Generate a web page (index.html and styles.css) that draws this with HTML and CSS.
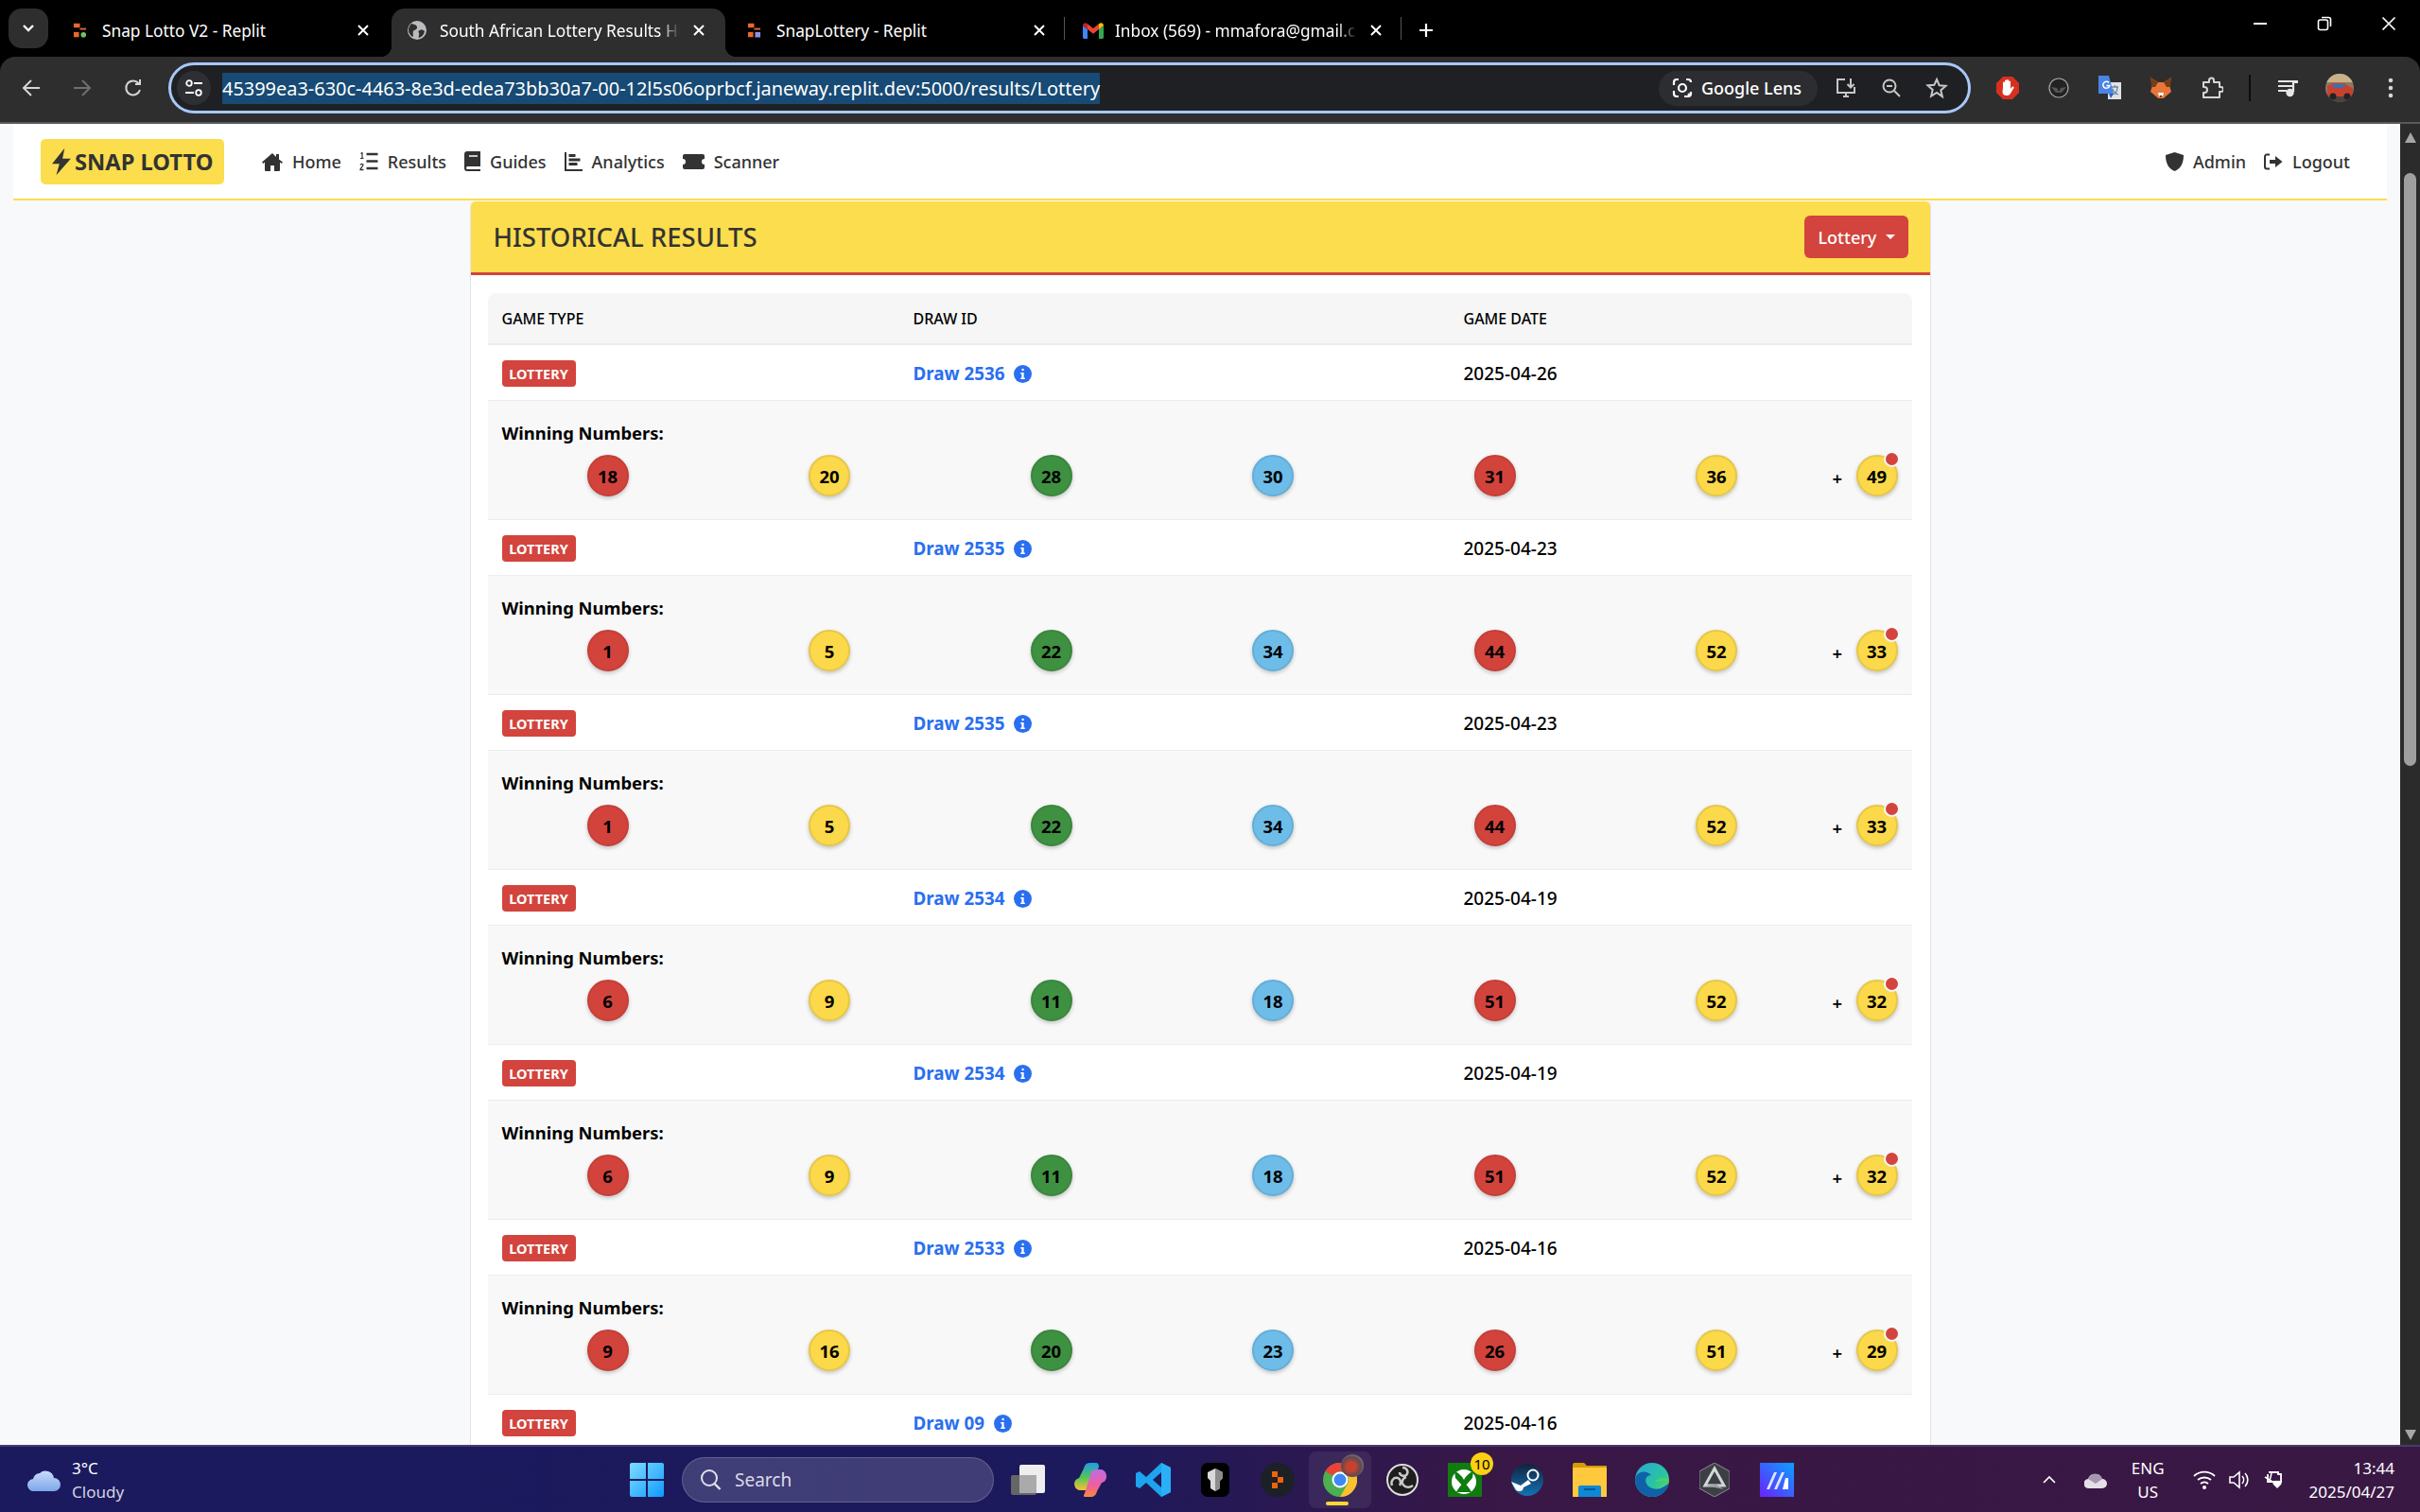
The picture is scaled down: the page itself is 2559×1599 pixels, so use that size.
FILE: index.html
```html
<!DOCTYPE html>
<html lang="en">
<head>
<meta charset="utf-8">
<title>South African Lottery Results History</title>
<link rel="stylesheet" href="styles.css">
</head>
<body>
<svg class="defs" width="0" height="0">
  <symbol id="info" viewBox="0 0 20 20"><circle cx="10" cy="10" r="10" fill="#2a6ff0"/><rect x="8.800" y="4" width="2.600" height="2.600" rx="1.300" fill="#fff"/><path d="M7.600 8.300h3.600v6h1.200v1.600H7.600v-1.600h1.200V9.900H7.600z" fill="#fff"/></symbol>
  <symbol id="replit" viewBox="0 0 16 16"><rect x="1" y="0" width="7" height="5" fill="#e8682a"/><rect x="8" y="5.500" width="7" height="2" fill="#e8682a"/><rect x="1" y="10" width="6" height="6" fill="#e8682a"/></symbol>
  <symbol id="x" viewBox="0 0 16 16"><path d="M3 3l10 10M13 3L3 13" stroke="#fff" stroke-width="2" fill="none"/></symbol>
</svg>

<header class="tabstrip">
  <button class="tab-list"><svg width="14" height="10" viewBox="0 0 14 10"><path d="M2 2l5 5 5-5" stroke="#fff" stroke-width="2.400" fill="none"/></svg></button>
  <div class="tab first">
    <svg class="fav" width="15" height="16" viewBox="0 0 16 16"><use href="#replit"/><circle cx="12" cy="13" r="3" fill="#6cc56c"/></svg>
    <span class="tab-title">Snap Lotto V2 - Replit</span>
    <svg class="close" width="16" height="16"><use href="#x"/></svg>
  </div>
  <div class="tab active">
    <svg class="fav" width="20" height="20" viewBox="0 0 20 20"><circle cx="10" cy="10" r="10" fill="#b9bbbe"/><path d="M4 3c3 1 6 1 6 4s-3 2-4 4 1 5-1 6c-2-2-4-4-4-7s1-5 3-7zM13 10c2-1 4 0 5 1-1 4-3 6-6 7-1-3 1-3 0-5s-1-2 1-3z" fill="#2e2e2e"/></svg>
    <span class="tab-title fade">South African Lottery Results History</span>
    <svg class="close" width="16" height="16"><use href="#x"/></svg>
  </div>
  <div class="tab third">
    <svg class="fav" width="15" height="16" viewBox="0 0 16 16"><use href="#replit"/><rect x="9" y="10" width="6" height="6" fill="#8f8fe0"/></svg>
    <span class="tab-title">SnapLottery - Replit</span>
    <svg class="close" width="16" height="16"><use href="#x"/></svg>
  </div>
  <div class="tab last">
    <svg class="fav gmail" width="22" height="17" viewBox="0 0 22 17"><path d="M0 3v12.500C0 16.300.7 17 1.500 17H5V7z" fill="#4285f4"/><path d="M22 3v12.500c0 .8-.7 1.500-1.500 1.500H17V7z" fill="#34a853"/><path d="M0 3c0-2.500 2.700-3.600 4.400-2.200L5 1.300V7z" fill="#c5221f"/><path d="M5 1.300L11 6l6-4.700V7l-6 4.700L5 7z" fill="#ea4335"/><path d="M17 1.300l.6-.5C19.300-.6 22 .5 22 3l-5 4z" fill="#fbbc04"/></svg>
    <span class="tab-title fade">Inbox (569) - mmafora@gmail.com</span>
    <svg class="close" width="16" height="16"><use href="#x"/></svg>
  </div>
  <div class="new-tab"><svg width="18" height="18" viewBox="0 0 18 18"><path d="M9 2v14M2 9h14" stroke="#fff" stroke-width="2.200"/></svg></div>
  <div class="window-controls">
    <svg width="16" height="16" viewBox="0 0 16 16"><path d="M1 8h14" stroke="#fff" stroke-width="2"/></svg>
    <svg width="16" height="16" viewBox="0 0 16 16"><rect x="1.500" y="4" width="10" height="10.500" rx="2" fill="none" stroke="#fff" stroke-width="1.600"/><path d="M5 1.500h7.500a2 2 0 0 1 2 2V11" fill="none" stroke="#fff" stroke-width="1.600"/></svg>
    <svg width="16" height="16" viewBox="0 0 16 16"><path d="M1.500 1.500l13 13M14.500 1.500l-13 13" stroke="#fff" stroke-width="1.700"/></svg>
  </div>
</header>

<div class="toolbar">
  <div class="nav-btn"><svg width="22" height="22" viewBox="0 0 22 22"><path d="M20 11H3M11 3l-8 8 8 8" fill="none" stroke="#d6d6d6" stroke-width="2"/></svg></div>
  <div class="nav-btn"><svg width="22" height="22" viewBox="0 0 22 22"><path d="M2 11h17M11 3l8 8-8 8" fill="none" stroke="#6f6f6f" stroke-width="2"/></svg></div>
  <div class="nav-btn"><svg width="22" height="22" viewBox="0 0 22 22"><path d="M18 13a7.500 7.500 0 1 1-1.500-7M18 2v5h-5" fill="none" stroke="#d6d6d6" stroke-width="2"/></svg></div>
  <div class="omnibox">
    <span class="site-btn"><svg width="20" height="20" viewBox="0 0 20 20"><circle cx="5" cy="5" r="2.800" fill="none" stroke="#fff" stroke-width="1.800"/><path d="M10 5h9M1 15h9" stroke="#fff" stroke-width="1.800"/><circle cx="15" cy="15" r="2.800" fill="none" stroke="#fff" stroke-width="1.800"/></svg></span>
    <span class="url">45399ea3-630c-4463-8e3d-edea73bb30a7-00-12l5s06oprbcf.janeway.replit.dev:5000/results/Lottery</span>
    <span class="lens">
      <svg width="22" height="22" viewBox="0 0 22 22"><path d="M2 8V5a3 3 0 0 1 3-3h2M15 2h2a3 3 0 0 1 3 3M7 20H5a3 3 0 0 1-3-3v-3M20 15v2a3 3 0 0 1-3 3h-4" fill="none" stroke="#fff" stroke-width="2.200"/><circle cx="11" cy="11" r="4" fill="none" stroke="#fff" stroke-width="2.200"/><circle cx="18" cy="18" r="1.500" fill="#fff"/></svg>
      <span>Google Lens</span>
    </span>
    <span class="omni-icon"><svg width="24" height="24" viewBox="0 0 24 24"><path d="M11 3H3v14h18v-6M9 21h6M12 17v4" fill="none" stroke="#c7c7c7" stroke-width="2"/><path d="M17 2v9M13.500 8l3.500 3.500L20.500 8" fill="none" stroke="#c7c7c7" stroke-width="2"/></svg></span>
    <span class="omni-icon"><svg width="22" height="22" viewBox="0 0 22 22"><circle cx="9" cy="9" r="6.500" fill="none" stroke="#c7c7c7" stroke-width="2"/><path d="M6 9h6M14 14l6 6" stroke="#c7c7c7" stroke-width="2"/></svg></span>
    <span class="omni-icon"><svg width="24" height="24" viewBox="0 0 24 24"><path d="M12 3l2.700 6.300 6.800.6-5.200 4.500 1.600 6.700L12 17l-5.900 3.600 1.600-6.700-5.200-4.500 6.800-.6z" fill="none" stroke="#c7c7c7" stroke-width="2"/></svg></span>
  </div>
  <div class="extensions">
    <span class="ext"><svg width="26" height="26" viewBox="0 0 26 26"><path d="M8 1h10l7 7v10l-7 7H8l-7-7V8z" fill="#d8301f"/><path d="M8 13V7.500a1 1 0 0 1 2 0V12V5.500a1 1 0 0 1 2 0V12V5a1 1 0 0 1 2 0v7V6.500a1 1 0 0 1 2 0V14l1.500-2c1-1 2.500 0 2 1l-3 5c-1 2-2 3-4 3h-1c-2 0-4-1-4-4z" fill="#fff"/></svg></span>
    <span class="ext"><svg width="22" height="22" viewBox="0 0 22 22"><circle cx="11" cy="11" r="10" fill="#222" stroke="#aaa" stroke-width="1.200"/><path d="M3 10l6 1 2 4 2-4 6-1-5 6h-6z" fill="#555"/></svg></span>
    <span class="ext"><svg width="26" height="26" viewBox="0 0 26 26"><path d="M11 7h14v18H11z" fill="#dfe3e6"/><path d="M15 12h7M18.500 10v2M16 20c3-1 5-4 5-8M16 14c1 3 3 5 6 6" fill="none" stroke="#6f8a96" stroke-width="1.300"/><path d="M1 0h11l5 19H1z" fill="#4b83e6"/><path d="M12 19l5 0-3 5z" fill="#2f5fc0"/><path d="M12 7.500a3.500 3.500 0 1 0 .8 3H9.500" fill="none" stroke="#fff" stroke-width="1.500"/></svg></span>
    <span class="ext"><svg width="24" height="24" viewBox="0 0 24 24"><path d="M1 1l8 5h6l8-5-2 8 2 7-6 5-2 2h-6l-2-2-6-5 2-7z" fill="#e8763a"/><path d="M1 1l8 5-3 5H2zM23 1l-8 5 3 5h4z" fill="#763d16"/><path d="M9 17h6l-1 4h-4z" fill="#fff"/><path d="M10.500 20h3l-1.500 2z" fill="#222"/></svg></span>
    <span class="ext"><svg width="24" height="24" viewBox="0 0 24 24"><path d="M3 6h6V4a2.500 2.500 0 0 1 5 0v2h6v5h1.500a2.500 2.500 0 0 1 0 5H20v6H3v-5h1a3 3 0 0 0 0-6H3z" fill="none" stroke="#d6d6d6" stroke-width="2" stroke-linejoin="round"/></svg></span>
  </div>
  <span class="tool-sep"></span>
  <div class="profile-tools">
    <span class="ext2"><svg width="24" height="22" viewBox="0 0 24 22"><path d="M1 4h15M1 9h15M1 14h9" stroke="#e6e6e6" stroke-width="2.200"/><path d="M17 3v12" stroke="#e6e6e6" stroke-width="2.200"/><path d="M17 3h5v3h-5z" fill="#e6e6e6"/><circle cx="13.500" cy="16" r="4.200" fill="#e6e6e6"/></svg></span>
    <span class="ext2 avatar"><svg width="30" height="30" viewBox="0 0 30 30"><defs><clipPath id="av"><circle cx="15" cy="15" r="15"/></clipPath></defs><g clip-path="url(#av)"><rect width="30" height="30" fill="#8b7a64"/><rect width="30" height="9" fill="#c9b28a"/><rect y="22" width="30" height="8" fill="#4a4440"/><path d="M2 13l6-3h12l6 4 3 1v9H2z" fill="#c8412f"/><rect x="8" y="11" width="12" height="4" fill="#3d6fb0"/><circle cx="8" cy="24" r="3.500" fill="#222"/><circle cx="23" cy="24" r="3.500" fill="#222"/></g></svg></span>
    <span class="ext2"><svg width="6" height="22" viewBox="0 0 6 22"><circle cx="3" cy="3" r="2.300" fill="#d6d6d6"/><circle cx="3" cy="11" r="2.300" fill="#d6d6d6"/><circle cx="3" cy="19" r="2.300" fill="#d6d6d6"/></svg></span>
  </div>
</div>

<div class="viewport">
  <main class="page">
    <nav class="site-nav">
      <a class="brand"><svg width="22" height="30" viewBox="0 0 20 26"><path d="M13 0L1 15h7l-3 11 14-16h-8z" fill="#333"/></svg>SNAP LOTTO</a>
      <a class="nav-item"><svg width="22" height="20" viewBox="0 0 22 20"><path d="M11 1L0 10.500l1.300 1.500L3 10.500V19a1 1 0 0 0 1 1h5v-6h4v6h5a1 1 0 0 0 1-1v-8.500l1.700 1.500 1.300-1.500L18 7.500V2h-3v3z" fill="#333"/></svg>Home</a>
      <a class="nav-item"><svg width="20" height="20" viewBox="0 0 20 20"><path d="M1.500 1.500L3 .5v6M1 6.500h3.500" fill="none" stroke="#333" stroke-width="1.200"/><path d="M1 13.500c.5-1.500 3-1.500 3 0 0 1.500-3 3-3 5h3.500" fill="none" stroke="#333" stroke-width="1.300"/><path d="M7.500 2h12M7.500 9.500h12M7.500 17h12" stroke="#333" stroke-width="2.600"/></svg>Results</a>
      <a class="nav-item"><svg width="17" height="21" viewBox="0 0 17 21"><path d="M3 0h14v16H3.500a1.500 1.500 0 0 0 0 3H17v2H3a3 3 0 0 1-3-3V3a3 3 0 0 1 3-3z" fill="#333"/><path d="M5 5h9" stroke="#fff" stroke-width="1.500"/></svg>Guides</a>
      <a class="nav-item"><svg width="19" height="20" viewBox="0 0 19 20"><path d="M1 0v19h18" fill="none" stroke="#333" stroke-width="2"/><path d="M4.500 3.500h7M4.500 8h12M4.500 12.500h9" stroke="#333" stroke-width="2.800"/></svg>Analytics</a>
      <a class="nav-item"><svg width="23" height="18" viewBox="0 0 23 18"><path d="M2 1h19a2 2 0 0 1 2 2v3a3 3 0 0 0 0 6v3a2 2 0 0 1-2 2H2a2 2 0 0 1-2-2v-3a3 3 0 0 0 0-6V3a2 2 0 0 1 2-2z" fill="#333"/></svg>Scanner</a>
      <a class="nav-item push"><svg width="19" height="20" viewBox="0 0 19 20"><path d="M9.500 0L19 3c0 8-2.500 14-9.500 17C2.500 17 0 11 0 3z" fill="#333"/></svg>Admin</a>
      <a class="nav-item"><svg width="20" height="18" viewBox="0 0 20 18"><path d="M6 1.500H3A2 2 0 0 0 1 3.500v11a2 2 0 0 0 2 2h3" fill="none" stroke="#333" stroke-width="2"/><path d="M6 7h6V3l7.500 6-7.500 6v-4H6z" fill="#333"/></svg>Logout</a>
    </nav>

    <section class="card">
      <div class="card-head">
        <h1>HISTORICAL RESULTS</h1>
        <button class="filter">Lottery<span class="caret"></span></button>
      </div>
      <div class="card-body">
        <table class="results">
          <thead>
            <tr><th class="col-type">GAME TYPE</th><th class="col-draw">DRAW ID</th><th>GAME DATE</th></tr>
          </thead>
          <tbody>
            <tr class="draw"><td><span class="badge">LOTTERY</span></td><td><a class="draw-link">Draw 2536</a><svg class="info" width="19" height="19"><use href="#info"/></svg></td><td class="date">2025-04-26</td></tr>
            <tr class="nums"><td colspan="3"><div class="win">Winning Numbers:</div><div class="balls"><span class="ball red">18</span><span class="ball yellow">20</span><span class="ball green">28</span><span class="ball blue">30</span><span class="ball red">31</span><span class="ball yellow">36</span><span class="bonus"><span class="plus">+</span><span class="ball yellow dot">49</span></span></div></td></tr>

            <tr class="draw"><td><span class="badge">LOTTERY</span></td><td><a class="draw-link">Draw 2535</a><svg class="info" width="19" height="19"><use href="#info"/></svg></td><td class="date">2025-04-23</td></tr>
            <tr class="nums"><td colspan="3"><div class="win">Winning Numbers:</div><div class="balls"><span class="ball red">1</span><span class="ball yellow">5</span><span class="ball green">22</span><span class="ball blue">34</span><span class="ball red">44</span><span class="ball yellow">52</span><span class="bonus"><span class="plus">+</span><span class="ball yellow dot">33</span></span></div></td></tr>

            <tr class="draw"><td><span class="badge">LOTTERY</span></td><td><a class="draw-link">Draw 2535</a><svg class="info" width="19" height="19"><use href="#info"/></svg></td><td class="date">2025-04-23</td></tr>
            <tr class="nums"><td colspan="3"><div class="win">Winning Numbers:</div><div class="balls"><span class="ball red">1</span><span class="ball yellow">5</span><span class="ball green">22</span><span class="ball blue">34</span><span class="ball red">44</span><span class="ball yellow">52</span><span class="bonus"><span class="plus">+</span><span class="ball yellow dot">33</span></span></div></td></tr>

            <tr class="draw"><td><span class="badge">LOTTERY</span></td><td><a class="draw-link">Draw 2534</a><svg class="info" width="19" height="19"><use href="#info"/></svg></td><td class="date">2025-04-19</td></tr>
            <tr class="nums"><td colspan="3"><div class="win">Winning Numbers:</div><div class="balls"><span class="ball red">6</span><span class="ball yellow">9</span><span class="ball green">11</span><span class="ball blue">18</span><span class="ball red">51</span><span class="ball yellow">52</span><span class="bonus"><span class="plus">+</span><span class="ball yellow dot">32</span></span></div></td></tr>

            <tr class="draw"><td><span class="badge">LOTTERY</span></td><td><a class="draw-link">Draw 2534</a><svg class="info" width="19" height="19"><use href="#info"/></svg></td><td class="date">2025-04-19</td></tr>
            <tr class="nums"><td colspan="3"><div class="win">Winning Numbers:</div><div class="balls"><span class="ball red">6</span><span class="ball yellow">9</span><span class="ball green">11</span><span class="ball blue">18</span><span class="ball red">51</span><span class="ball yellow">52</span><span class="bonus"><span class="plus">+</span><span class="ball yellow dot">32</span></span></div></td></tr>

            <tr class="draw"><td><span class="badge">LOTTERY</span></td><td><a class="draw-link">Draw 2533</a><svg class="info" width="19" height="19"><use href="#info"/></svg></td><td class="date">2025-04-16</td></tr>
            <tr class="nums"><td colspan="3"><div class="win">Winning Numbers:</div><div class="balls"><span class="ball red">9</span><span class="ball yellow">16</span><span class="ball green">20</span><span class="ball blue">23</span><span class="ball red">26</span><span class="ball yellow">51</span><span class="bonus"><span class="plus">+</span><span class="ball yellow dot">29</span></span></div></td></tr>

            <tr class="draw"><td><span class="badge">LOTTERY</span></td><td><a class="draw-link">Draw 09</a><svg class="info" width="19" height="19"><use href="#info"/></svg></td><td class="date">2025-04-16</td></tr>
          </tbody>
        </table>
      </div>
    </section>
  </main>
  <aside class="scrollbar">
    <span class="arrow-up"></span>
    <span class="thumb"></span>
    <span class="arrow-down"></span>
  </aside>
</div>

<footer class="taskbar">
  <div class="weather">
    <svg width="36" height="26" viewBox="0 0 36 26"><defs><linearGradient id="cl" x1="0" y1="0" x2="0" y2="1"><stop offset="0" stop-color="#c7dcfb"/><stop offset="1" stop-color="#7ea6e8"/></linearGradient></defs><path d="M7 25a6.500 6.500 0 0 1-1-13 8 8 0 0 1 7-6 9 9 0 0 1 15 5 7 7 0 0 1 0 14z" fill="url(#cl)"/></svg>
    <div class="weather-text"><span>3°C</span><span class="dim">Cloudy</span></div>
  </div>
  <div class="apps">
    <span class="app"><svg width="36" height="36" viewBox="0 0 36 36"><defs><linearGradient id="st" x1="0" y1="0" x2="1" y2="1"><stop offset="0" stop-color="#7fdcff"/><stop offset="1" stop-color="#0f9bff"/></linearGradient></defs><path d="M0 2a2 2 0 0 1 2-2h15v17H0zM19 0h15a2 2 0 0 1 2 2v15H19zM0 19h17v17H2a2 2 0 0 1-2-2zM19 19h17v15a2 2 0 0 1-2 2H19z" fill="url(#st)"/></svg></span>
    <span class="search"><svg width="23" height="24" viewBox="0 0 23 24"><circle cx="10" cy="10" r="8" fill="none" stroke="#e2e0ee" stroke-width="2"/><path d="M15.500 16l6 6" stroke="#e2e0ee" stroke-width="2.400"/></svg><span>Search</span></span>
    <span class="app"><svg width="36" height="32" viewBox="0 0 36 32"><rect x="0" y="11" width="27" height="21" rx="2" fill="#666"/><rect x="9" y="0" width="27" height="30" rx="2" fill="#eee"/><rect x="9" y="11" width="18" height="19" fill="#aaa"/></svg></span>
    <span class="app"><svg width="34" height="36" viewBox="0 0 34 36"><defs><linearGradient id="cp1" x1="0" y1="0" x2="0" y2="1"><stop offset="0" stop-color="#1f9be8"/><stop offset=".5" stop-color="#4ec45c"/><stop offset="1" stop-color="#f7c22f"/></linearGradient><linearGradient id="cp2" x1="0" y1="0" x2="0" y2="1"><stop offset="0" stop-color="#c06be8"/><stop offset=".6" stop-color="#ef5f9b"/><stop offset="1" stop-color="#f98a3a"/></linearGradient></defs><path d="M10 6C11 2 13 0 17 0h6c2 0 3 2 3 4L19 26c-1 2-3 3-5 3H6c-4 0-6-4-6-7 0-3 2-5 5-6z" fill="url(#cp1)"/><path d="M24 30c-1 4-3 6-7 6h-5c-3 0-2-2-1-4l7-22c1-2 3-3 5-3h5c3 0 6 3 6 7 0 3-1 6-5 7z" fill="url(#cp2)"/></svg></span>
    <span class="app"><svg width="37" height="36" viewBox="0 0 37 36"><path d="M27 0l10 5v26l-10 5L11 21 4 27l-4-2V11l4-2 7 6zM27 10l-9 8 9 8z" fill="#1ea3ee" fill-rule="evenodd"/><path d="M27 0l10 5v26l-10 5z" fill="#29b0f7"/></svg></span>
    <span class="app"><svg width="30" height="36" viewBox="0 0 30 36"><rect width="30" height="36" rx="7" fill="#000"/><path d="M7 10l8-4 8 4v6l-3 3v8l-5 3-5-3v-8l-3-3z" fill="#d9d9d9"/><path d="M15 6v24l5-3v-8l3-3v-6z" fill="#8c8c8c"/></svg></span>
    <span class="app"><svg width="36" height="36" viewBox="0 0 36 36"><circle cx="18" cy="18" r="18" fill="#1c2027"/><path d="M12 9h6v6h-6zM18 15h6v6h-6zM12 21h6v6h-6z" fill="#f26207"/></svg></span>
    <span class="app current"><svg width="36" height="36" viewBox="0 0 36 36"><circle cx="18" cy="18" r="18" fill="#4caf50"/><path d="M18 0a18 18 0 0 1 15.600 9H18a9 9 0 0 0-7.800 4.500L2.400 9A18 18 0 0 1 18 0z" fill="#ea4335"/><path d="M33.600 9A18 18 0 0 1 18 36l7.800-13.500A9 9 0 0 0 25.800 13.500z" fill="#fbc02d"/><circle cx="18" cy="18" r="8.500" fill="#fff"/><circle cx="18" cy="18" r="6.500" fill="#3f87f5"/></svg><i class="app-avatar"></i><i class="indicator"></i></span>
    <span class="app"><svg width="34" height="36" viewBox="0 0 34 36"><circle cx="17" cy="18" r="16" fill="#1e1e1e" stroke="#ddd" stroke-width="2"/><path d="M17 5c5 0 7 5 4 8-3 2-7 0-7-3M6 24c-2-5 2-9 6-8 3 1 4 5 2 8M28 24c-4 3-9 2-11-2-1-3 1-6 4-7" fill="none" stroke="#c9c9c9" stroke-width="2.500"/></svg></span>
    <span class="app"><svg width="36" height="36" viewBox="0 0 36 36"><rect width="36" height="36" rx="1" fill="#107c10"/><circle cx="17" cy="20" r="13" fill="#fff"/><path d="M7 9c4 1 8 5 10 9 2-4 6-8 10-9l-1 7-9 10-9-10zM9 31c2-4 5-8 8-10 3 2 6 6 8 10z" fill="#107c10"/></svg><i class="count">10</i></span>
    <span class="app"><svg width="34" height="36" viewBox="0 0 34 36"><defs><linearGradient id="sm" x1="0" y1="0" x2="0" y2="1"><stop offset="0" stop-color="#10233f"/><stop offset="1" stop-color="#1372b3"/></linearGradient></defs><circle cx="17" cy="18" r="17" fill="url(#sm)"/><circle cx="23" cy="13" r="5.500" fill="none" stroke="#fff" stroke-width="2"/><path d="M0 20l10 4 8-6 3 4-8 4-1 3c-3 2-7 1-8-2z" fill="#fff"/></svg></span>
    <span class="app"><svg width="36" height="36" viewBox="0 0 36 36"><path d="M0 2a2 2 0 0 1 2-2h10l3 3h21v33H0z" fill="#d49c0a"/><rect y="5" width="36" height="31" rx="1" fill="#ffc83d"/><path d="M6 36V26a2 2 0 0 1 2-2h20a2 2 0 0 1 2 2v10z" fill="#0f87d4"/><rect x="12" y="27" width="12" height="2" fill="#075a97"/></svg></span>
    <span class="app"><svg width="36" height="36" viewBox="0 0 36 36"><defs><linearGradient id="ed" x1="0" y1="0" x2="1" y2="1"><stop offset="0" stop-color="#2ba6dc"/><stop offset=".6" stop-color="#28c5a0"/><stop offset="1" stop-color="#6ee04e"/></linearGradient></defs><circle cx="18" cy="18" r="18" fill="url(#ed)"/><path d="M36 21c-2 10-10 15-18 15C8 36 0 28 0 18 1 9 11 7 17 13c-5 0-7 4-5 9 3 6 12 7 17 4 3-2 6-3 7-5z" fill="#0f62a8"/><path d="M21 20c3 0 9-1 15 0 0-3-2-4-6-4-5 0-8 2-9 4z" fill="#4fd06e"/></svg></span>
    <span class="app"><svg width="32" height="36" viewBox="0 0 32 36"><path d="M16 0l16 9v18l-16 9-16-9V9z" fill="#3c4045" stroke="#8a8e92"/><path d="M16 6L26 24 6 24z" fill="none" stroke="#d4d6d8" stroke-width="3"/><path d="M6 24l20 4-8-5z" fill="#9b9fa3"/></svg></span>
    <span class="app"><svg width="36" height="36" viewBox="0 0 36 36"><defs><linearGradient id="mx" x1="1" y1="0" x2="0" y2="1"><stop offset="0" stop-color="#0aa0ff"/><stop offset="1" stop-color="#6a22ff"/></linearGradient></defs><rect width="36" height="36" fill="url(#mx)"/><path d="M7 28L15 10h3L10 28zM15 28l8-18h3l-8 18z" fill="#dfe6ff"/><path d="M24 28l3-12 3 0v12z" fill="#fff"/></svg></span>
  </div>
  <div class="tray">
    <svg class="t-chev" width="16" height="10" viewBox="0 0 16 10"><path d="M2 8l6-6 6 6" fill="none" stroke="#fff" stroke-width="1.600"/></svg>
    <svg class="t-cloud" width="24" height="24" viewBox="0 0 24 24"><path d="M5 21a5 5 0 0 1-1-10 8 8 0 0 1 15 0 5 5 0 0 1 0 10z" fill="#e5dfe8"/><path d="M4 11a8 8 0 0 1 15 0l-7 5z" fill="#a797ae"/></svg>
    <div class="lang"><span>ENG</span><span>US</span></div>
    <svg class="t-wifi" width="24" height="22" viewBox="0 0 24 22"><path d="M1 7a16 16 0 0 1 22 0M5 11a11 11 0 0 1 14 0M8 15a6 6 0 0 1 8 0" fill="none" stroke="#fff" stroke-width="1.800"/><circle cx="12" cy="19" r="2" fill="#fff"/></svg>
    <svg class="t-vol" width="24" height="22" viewBox="0 0 24 22"><path d="M2 8h4l6-5v16l-6-5H2z" fill="none" stroke="#fff" stroke-width="1.600"/><path d="M15 7a6 6 0 0 1 0 8M18 4a10 10 0 0 1 0 14" fill="none" stroke="#fff" stroke-width="1.600"/></svg>
    <svg class="t-bat" width="26" height="26" viewBox="0 0 26 26"><path d="M6 5h10v2h3v8H5V7" fill="none" stroke="#fff" stroke-width="1.800"/><path d="M2 10l8 5M9 6l-2 8" stroke="#fff" stroke-width="1.500"/><path d="M15 22l-4-4a2.500 2.500 0 0 1 4-3 2.500 2.500 0 0 1 4 3z" fill="#fff"/></svg>
    <div class="clock"><span>13:44</span><span>2025/04/27</span></div>
  </div>
</footer>
</body>
</html>
```

FILE: styles.css
```css
* { box-sizing: border-box; }
html, body { margin: 0; padding: 0; }
body {
  width: 2559px;
  height: 1599px;
  overflow: hidden;
  display: flex;
  flex-direction: column;
  font-family: "Noto Sans", "Open Sans", "Liberation Sans", sans-serif;
  background: #000;
  color: #000;
}
.defs { position: absolute; }
svg { display: block; flex: none; }

/* Tab strip */
.tabstrip {
  height: 60px;
  background: #000;
  display: flex;
  align-items: flex-end;
  padding-left: 9px;
  flex: none;
}
.tab-list {
  width: 42px;
  height: 42px;
  margin: 0 5px 9px 0;
  align-self: flex-end;
  background: #2e2e2e;
  border: 0;
  border-radius: 14px;
  display: flex;
  align-items: center;
  justify-content: center;
}
.tab {
  width: 356px;
  height: 51px;
  padding: 0 20px 5px 21px;
  display: flex;
  align-items: center;
  position: relative;
  color: #fff;
  font-size: 17.300px;
  white-space: nowrap;
}
.tab.first { padding-left: 21px; }
.tab.active {
  background: #2e2e2e;
  border-radius: 14px 14px 0 0;
  width: 353px;
  margin-left: 2px;
  padding-left: 17px;
  margin-right: 2px;
}
.tab.active::before, .tab.active::after {
  content: "";
  position: absolute;
  bottom: 0;
  width: 12px;
  height: 12px;
}
.tab.active::before { left: -12px; background: radial-gradient(circle at 0 0, #000 12px, #2e2e2e 12.500px); }
.tab.active::after { right: -12px; background: radial-gradient(circle at 100% 0, #000 12px, #2e2e2e 12.500px); }
.tab.third { padding-left: 21px; width: 358px; }
.tab.last::before, .new-tab::before {
  content: "";
  position: absolute;
  left: -2px;
  top: 9px;
  height: 24px;
  width: 1px;
  background: #555;
}
.tab.last { padding-left: 18px; }
.fav { margin-right: 16px; }
.gmail { margin-right: 12px; }
.active .fav { margin-right: 14px; }
.tab-title { flex: 1; overflow: hidden; min-width: 0; }
.fade { -webkit-mask-image: linear-gradient(to right, #000 92%, transparent 100%); mask-image: linear-gradient(to right, #000 92%, transparent 100%); }
.close { margin-left: 12px; }
.new-tab {
  width: 50px;
  height: 51px;
  padding-bottom: 5px;
  position: relative;
  display: flex;
  align-items: center;
  justify-content: center;
}
.window-controls {
  margin-left: auto;
  align-self: stretch;
  display: flex;
  align-items: center;
  gap: 52px;
  padding: 0 25px 10px 0;
}

/* Toolbar */
.toolbar {
  height: 71px;
  flex: none;
  background: #2e2e2e;
  border-radius: 16px 16px 0 0;
  border-bottom: 2px solid #5a5a5a;
  display: flex;
  align-items: center;
  padding: 0 0 3px 6px;
}
.nav-btn {
  width: 54px;
  height: 40px;
  display: flex;
  align-items: center;
  justify-content: center;
}
.omnibox {
  width: 1906px;
  height: 54px;
  margin-left: 10px;
  border: 3px solid #a8c7fa;
  border-radius: 27px;
  background: #1f2023;
  display: flex;
  align-items: center;
  padding: 0 9px 0 6px;
  color: #fff;
}
.site-btn {
  width: 36px;
  height: 36px;
  border-radius: 50%;
  background: #2e2f32;
  display: flex;
  align-items: center;
  justify-content: center;
  margin-right: 12px;
}
.url {
  background: #174a74;
  line-height: 33px;
  font-size: 19.950px;
  white-space: nowrap;
}
.lens {
  margin-left: auto;
  width: 168px;
  height: 37px;
  border-radius: 19px;
  background: #2c2d30;
  display: flex;
  align-items: center;
  gap: 9px;
  padding-left: 14px;
  font-size: 18px;
  font-weight: 500;
  margin-right: 6px;
}
.omni-icon {
  width: 48px;
  display: flex;
  justify-content: center;
}
.extensions { display: flex; margin-left: 12px; }
.ext {
  width: 54px;
  display: flex;
  justify-content: center;
  align-items: center;
}
.tool-sep {
  width: 2px;
  height: 28px;
  background: #0c0c0c;
  margin-left: 12px;
}
.profile-tools { display: flex; margin-left: 13px; }
.ext2 {
  width: 54px;
  height: 30px;
  display: flex;
  justify-content: center;
  align-items: center;
}
.avatar {
  width: 30px;
  margin: 0 12px;
}

/* Page */
.viewport {
  flex: 1;
  min-height: 0;
  display: flex;
  background: #f8f9fa;
}
.page {
  flex: 1;
  min-width: 0;
  overflow: hidden;
  padding: 0 14px;
}
.site-nav {
  height: 81px;
  background: #fff;
  border-bottom: 2px solid #fcdd4d;
  display: flex;
  align-items: center;
  padding: 0 39px 0 29px;
  gap: 19px;
}
.brand {
  width: 194px;
  height: 48px;
  margin-right: 21px;
  background: #fcdd4d;
  border-radius: 5px;
  display: flex;
  align-items: center;
  gap: 3px;
  padding-left: 11px;
  font-size: 23.700px;
  font-weight: 700;
  color: #333;
}
.nav-item {
  display: flex;
  align-items: center;
  gap: 10px;
  font-size: 18px;
  font-weight: 500;
  color: #333;
}
.push { margin-left: auto; }

.card {
  width: 1545px;
  margin: 1px auto 0;
  background: #fff;
  border: 1px solid #e3e5e8;
  border-top: 0;
  border-radius: 5px 5px 0 0;
}
.card-head {
  height: 78px;
  background: #fcdd4d;
  border-bottom: 3px solid #d2443d;
  border-radius: 5px 5px 0 0;
  display: flex;
  align-items: center;
  justify-content: space-between;
  padding: 0 23px 0 24px;
}
.card-head h1 {
  margin: 0;
  font-size: 27.500px;
  font-weight: 500;
  color: #333;
}
.filter {
  width: 110px;
  height: 45px;
  background: #d2443d;
  border: 0;
  border-radius: 6px;
  color: #fff;
  font: 500 18px "Noto Sans", sans-serif;
  display: flex;
  align-items: center;
  padding-left: 15px;
}
.caret {
  margin-left: 10px;
  border-top: 5px solid #fff;
  border-left: 5px solid transparent;
  border-right: 5px solid transparent;
}
.card-body { padding: 19px 18px 0; }
.results {
  width: 1506px;
  border-collapse: separate;
  border-spacing: 0;
  table-layout: fixed;
}
.results th {
  height: 55px;
  padding: 1px 15px 0;
  text-align: left;
  background: #f6f6f6;
  border-bottom: 2px solid #ececec;
  font-size: 16px;
  font-weight: 500;
  color: #000;
}
.results th:first-child { border-top-left-radius: 8px; }
.results th:last-child { border-top-right-radius: 8px; }
.col-type { width: 435px; }
.col-draw { width: 582px; }
.draw td {
  height: 59px;
  padding: 2px 15px 0;
  border-bottom: 1px solid #ececec;
  vertical-align: middle;
}
.draw td:nth-child(2) { white-space: nowrap; }
.badge {
  display: inline-block;
  width: 78px;
  height: 28px;
  line-height: 28px;
  text-align: center;
  background: #d2443d;
  border-radius: 4px;
  color: #fff;
  font-size: 14.500px;
  font-weight: 700;
  vertical-align: middle;
}
.draw-link {
  color: #2a6ff0;
  font-size: 18.800px;
  font-weight: 700;
  vertical-align: middle;
}
.info { display: inline-block; margin-left: 10px; vertical-align: middle; }
.date { font-size: 19px; font-weight: 500; }
.nums td {
  height: 126px;
  padding: 22px 15px 0;
  background: #f8f8f8;
  border-bottom: 1px solid #ececec;
  vertical-align: top;
}
.win {
  font-size: 18.400px;
  font-weight: 700;
  line-height: 24px;
}
.balls {
  margin-top: 11px;
  display: flex;
  padding-left: 90px;
  gap: 190px;
}
.ball {
  width: 44px;
  height: 44px;
  border-radius: 50%;
  border: 2px solid;
  display: flex;
  align-items: center;
  justify-content: center;
  font-size: 18.500px;
  font-weight: 700;
  color: #000;
  box-shadow: 0 2px 4px rgba(0,0,0,.22);
  flex: none;
  position: relative;
}
.red { background: #d2433c; border-color: #c53f38; }
.yellow { background: #fbd94a; border-color: #e6c747; }
.green { background: #3f9142; border-color: #3a863d; }
.blue { background: #6dbde8; border-color: #63aed8; }
.balls .ball { margin-right: .5px; }
.bonus {
  display: flex;
  align-items: center;
  justify-content: space-between;
  width: 71px;
  margin-left: -87px;
}
.bonus .ball { margin-right: 0; }
.plus { font-size: 18.500px; font-weight: 600; position: relative; top: 2px; left: -3px; }
.dot::after {
  content: "";
  position: absolute;
  top: -6px;
  right: -4px;
  width: 13px;
  height: 13px;
  border-radius: 50%;
  background: #d2443d;
  border: 2px solid #f8f8f8;
}

/* Scrollbar */
.scrollbar {
  width: 21px;
  flex: none;
  background: #2b2b2b;
  position: relative;
  display: flex;
  flex-direction: column;
  align-items: center;
  padding-top: 9px;
}
.arrow-up {
  border-bottom: 11px solid #a6a6a6;
  border-left: 6px solid transparent;
  border-right: 6px solid transparent;
}
.thumb {
  margin-top: 32px;
  width: 13px;
  height: 627px;
  background: #9f9f9f;
  border-radius: 7px;
}
.arrow-down {
  margin-top: auto;
  margin-bottom: 5px;
  border-top: 11px solid #a6a6a6;
  border-left: 6px solid transparent;
  border-right: 6px solid transparent;
}

/* Taskbar */
.taskbar {
  height: 71px;
  flex: none;
  background: linear-gradient(90deg, #1b1a5e 0%, #1c195c 45%, #391746 62%, #3a1844 100%);
  border-top: 2px solid #4a3a6a;
  display: flex;
  align-items: center;
  color: #fff;
  position: relative;
}
.weather {
  width: 651px;
  display: flex;
  align-items: center;
  gap: 11px;
  padding-left: 29px;
}
.weather-text, .lang, .clock {
  display: flex;
  flex-direction: column;
  font-size: 17px;
  line-height: 25px;
}
.dim { color: #d6d3e2; }
.apps { display: flex; align-items: center; }
.app {
  width: 66px;
  height: 60px;
  display: flex;
  align-items: center;
  justify-content: center;
  position: relative;
}
.search {
  width: 330px;
  height: 48px;
  margin: 0 3px 0 4px;
  border-radius: 24px;
  background: rgba(255,255,255,.16);
  border: 1px solid rgba(255,255,255,.18);
  display: flex;
  align-items: center;
  gap: 14px;
  padding-left: 18px;
  font-size: 19px;
  color: #dcdae8;
}
.current {
  background: rgba(255,255,255,.07);
  border-radius: 8px;
}
.app-avatar {
  position: absolute;
  top: 3px;
  right: 8px;
  width: 24px;
  height: 24px;
  border-radius: 50%;
  background: radial-gradient(circle at 45% 55%, #c8412f 0 25%, #5b4a55 55%, #b5a58c 100%);
}
.indicator {
  position: absolute;
  bottom: 3px;
  left: 18px;
  width: 24px;
  height: 4px;
  border-radius: 2px;
  background: #fdd835;
}
.count {
  position: absolute;
  top: 1px;
  right: 3px;
  width: 24px;
  height: 24px;
  border-radius: 50%;
  background: #fdd014;
  color: #000;
  font-style: normal;
  font-size: 15px;
  text-align: center;
  line-height: 24px;
}
.tray {
  margin-left: auto;
  display: flex;
  align-items: center;
  padding-right: 27px;
}
.t-chev { margin-right: 29px; }
.t-cloud { margin-right: 26px; }
.lang { align-items: center; margin-right: 30px; }
.t-wifi { margin-right: 13px; }
.t-vol { margin-right: 13px; }
.t-bat { margin-right: 23px; }
.clock { align-items: flex-end; }
```
